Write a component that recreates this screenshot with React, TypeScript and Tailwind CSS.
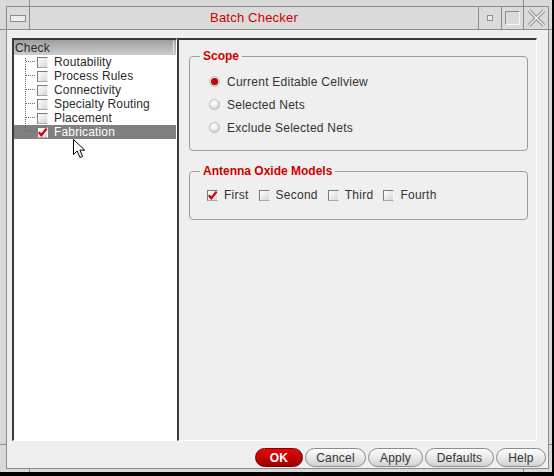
import React from "react";

const treeItems = [
  { label: "Routability", checked: false },
  { label: "Process Rules", checked: false },
  { label: "Connectivity", checked: false },
  { label: "Specialty Routing", checked: false },
  { label: "Placement", checked: false },
  { label: "Fabrication", checked: true, selected: true },
];

function CheckBox({ checked }: { checked?: boolean }) {
  return (
    <div className="w-[11px] h-[11px] shrink-0 border border-t-[#7a7a7a] border-l-[#7a7a7a] border-r-[#f4f4f4] border-b-[#a8a8a8] bg-linear-to-br from-[#ffffff] to-[#d6d6d6] flex items-center justify-center">
      {checked && (
        <svg width="11" height="11" viewBox="0 0 11 11" className="-m-px">
          <path d="M1.8 5.2 L4.3 8.2 L9.6 1.6" fill="none" stroke="#d00000" strokeWidth="2.2" />
        </svg>
      )}
    </div>
  );
}

function Radio({ selected }: { selected?: boolean }) {
  return (
    <div className="w-[11px] h-[11px] shrink-0 rounded-full border border-[#bcbcbc] bg-[radial-gradient(circle_at_40%_35%,#ffffff_0%,#eeeeee_45%,#b0b0b0_100%)] flex items-center justify-center">
      {selected && <div className="w-[5px] h-[5px] rounded-full bg-[#d40000] shadow-[0_0_0_1px_#a00000]" />}
    </div>
  );
}

function TreeLines({ first, last }: { first?: boolean; last?: boolean }) {
  return (
    <svg width="23" height="14" className="shrink-0" shapeRendering="crispEdges">
      <line x1="11.5" y1={first ? 3 : 0} x2="11.5" y2={last ? 7 : 14} stroke="#6a6a6a" strokeDasharray="1 1" />
      <line x1="12" y1="6.5" x2="22" y2="6.5" stroke="#6a6a6a" strokeDasharray="1 1" />
    </svg>
  );
}

function Button({ label, w, primary }: { label: string; w: string; primary?: boolean }) {
  if (primary)
    return (
      <button className={`${w} h-[19px] rounded-full border border-[#7a0000] bg-linear-to-b from-[#e80808] to-[#a00000] text-white font-bold text-[12px] leading-none tracking-[0.3px]`}>
        {label}
      </button>
    );
  return (
    <button className={`${w} h-[19px] rounded-full border border-[#8c8c8c] bg-linear-to-b from-[#fdfdfd] to-[#d3d3d3] text-[#333] text-[12px] leading-none tracking-[0.2px]`}>
      {label}
    </button>
  );
}

export default function App() {
  return (
    <div className="relative w-[554px] h-[476px] bg-[#d9d9d9] border-r-2 border-b-4 border-black pt-[6px] pl-[6px] pr-[3px] pb-[3px] font-['Liberation_Sans',Arial,sans-serif] overflow-hidden">
      {/* frame corner ticks */}
      <div className="absolute left-[29px] top-0 w-px h-[6px] bg-[#8c8c8c]" />
      <div className="absolute left-[523px] top-0 w-px h-[6px] bg-[#8c8c8c]" />
      <div className="absolute left-[29px] top-[469px] w-px h-[3px] bg-[#8c8c8c]" />
      <div className="absolute left-[523px] top-[469px] w-px h-[3px] bg-[#8c8c8c]" />
      <div className="absolute left-0 top-[29px] w-[6px] h-px bg-[#8c8c8c]" />
      <div className="absolute left-0 top-[444px] w-[6px] h-px bg-[#8c8c8c]" />
      <div className="absolute left-[549px] top-[29px] w-[3px] h-px bg-[#8c8c8c]" />
      <div className="absolute left-[549px] top-[444px] w-[3px] h-px bg-[#8c8c8c]" />

      <div className="w-full h-full border border-[#8c8c8c] flex flex-col">
        {/* title bar */}
        <div className="h-[23px] flex border-b border-[#8c8c8c] bg-[#dadada]">
          <div className="w-[23px] border-r border-[#8c8c8c] flex items-center justify-center">
            <div className="w-[16px] h-[7px] border border-[#8c8c8c] bg-[#ececec]" />
          </div>
          <div className="flex-1 flex items-center justify-center text-[13px] tracking-[0.2px] text-[#cc0000]">Batch Checker</div>
          <div className="w-[23px] border-l border-[#8c8c8c] flex items-center justify-center">
            <div className="w-[6px] h-[6px] border border-[#8c8c8c] bg-[#ececec]" />
          </div>
          <div className="w-[22px] border-l border-[#8c8c8c] flex items-center justify-center">
            <div className="w-[15px] h-[14px] border border-[#8c8c8c] border-r-[#f4f4f4] border-b-[#f4f4f4] bg-[#dadada]" />
          </div>
          <div className="w-[25px] border-l border-[#8c8c8c] flex items-center justify-center">
            <svg width="19" height="18" viewBox="0 0 19 18">
              <path d="M2 1.5 L17 16.5 M17 1.5 L2 16.5" stroke="#8c8c8c" strokeWidth="3.5" />
              <path d="M2 1.5 L17 16.5 M17 1.5 L2 16.5" stroke="#f0f0f0" strokeWidth="1.6" />
            </svg>
          </div>
        </div>

        {/* content */}
        <div className="flex-1 bg-[#efefef] flex flex-col pt-[8px] pl-[5px]">
          <div className="h-[403px] flex">
            {/* tree panel */}
            <div className="w-[165px] h-full border-l-2 border-t-2 border-r border-b border-[#3a3a3a] border-r-white border-b-white bg-white">
              <div className="h-[15px] flex items-center bg-linear-to-b from-[#9e9e9e] to-[#cdcdcd]">
                <span className="flex-1 pl-[1px] text-[12px] leading-none tracking-[0.2px] text-[#2a2a2a]">Check</span>
                <div className="w-px h-[13px] bg-[#e4e4e4] mr-[2px]" />
              </div>
              {treeItems.map((it, i) => (
                <div
                  key={it.label}
                  className={`h-[14px] flex items-center text-[12px] leading-none tracking-[0.15px] ${it.selected ? "bg-[#808080] text-white" : "text-[#2a2a2a]"}`}
                >
                  <TreeLines first={i === 0} last={i === treeItems.length - 1} />
                  <CheckBox checked={it.checked} />
                  <span className="ml-[6px]">{it.label}</span>
                </div>
              ))}
            </div>

            {/* options panel */}
            <div className="w-[360px] h-full border-l-2 border-t-2 border-r border-b border-[#3a3a3a] border-r-white border-b-white pl-[10px] pt-[9px]">
              <fieldset className="w-[339px] border border-[#9c9c9c] rounded-[4px] p-0">
                <legend className="ml-[10px] px-[3px] text-[12px] leading-[14px] font-bold text-[#cc0000]">Scope</legend>
                <div className="pt-[7px] pb-[11px] pl-[19px]">
                  {[
                    { label: "Current Editable Cellview", on: true },
                    { label: "Selected Nets" },
                    { label: "Exclude Selected Nets" },
                  ].map((r) => (
                    <div key={r.label} className="h-[23px] flex items-center gap-[7px] text-[12px] tracking-[0.25px] text-[#333]">
                      <Radio selected={r.on} />
                      <span>{r.label}</span>
                    </div>
                  ))}
                </div>
              </fieldset>

              <fieldset className="mt-[13px] w-[339px] border border-[#9c9c9c] rounded-[4px] p-0">
                <legend className="ml-[10px] px-[3px] text-[12px] leading-[14px] font-bold text-[#cc0000]">Antenna Oxide Models</legend>
                <div className="pt-[8px] pb-[15px] pl-[17px] h-[41px] flex items-center gap-[10px] text-[12px] tracking-[0.25px] text-[#333]">
                  {[
                    { label: "First", on: true },
                    { label: "Second" },
                    { label: "Third" },
                    { label: "Fourth" },
                  ].map((c) => (
                    <div key={c.label} className="flex items-center gap-[6px]">
                      <CheckBox checked={c.on} />
                      <span>{c.label}</span>
                    </div>
                  ))}
                </div>
              </fieldset>
            </div>
          </div>

          <div className="mt-[7px] h-[19px] flex justify-end gap-[2px] pr-[2px]">
            <Button label="OK" w="w-[48px]" primary />
            <Button label="Cancel" w="w-[61px]" />
            <Button label="Apply" w="w-[55px]" />
            <Button label="Defaults" w="w-[69px]" />
            <Button label="Help" w="w-[50px]" />
          </div>
        </div>
      </div>

      {/* mouse pointer */}
      <svg className="absolute left-[73px] top-[139px]" width="14" height="20" viewBox="0 0 14 20">
        <path d="M0.5 0.5 L0.5 15.5 L4.2 12 L7 18.5 L9.6 17.4 L6.9 11.2 L11.8 11.2 Z" fill="white" stroke="black" strokeWidth="1" />
      </svg>
    </div>
  );
}
